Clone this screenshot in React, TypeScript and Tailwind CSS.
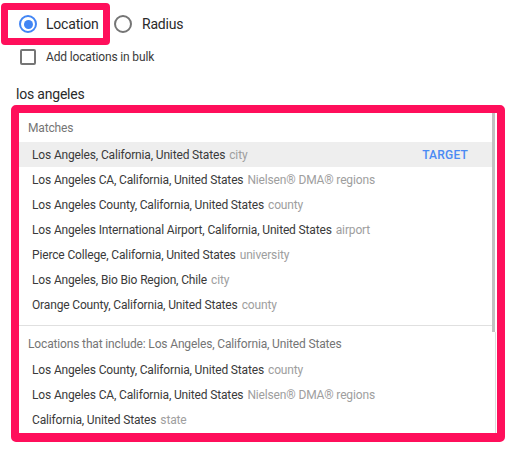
// App.tsx
// * location targeting picker w/ highlighted search results

type Result = { name: string; kind: string; target?: boolean };

const matches: Result[] = [
  { name: 'Los Angeles, California, United States', kind: 'city', target: true },
  { name: 'Los Angeles CA, California, United States', kind: 'Nielsen® DMA® regions' },
  { name: 'Los Angeles County, California, United States', kind: 'county' },
  { name: 'Los Angeles International Airport, California, United States', kind: 'airport' },
  { name: 'Pierce College, California, United States', kind: 'university' },
  { name: 'Los Angeles, Bio Bio Region, Chile', kind: 'city' },
  { name: 'Orange County, California, United States', kind: 'county' },
];

const includes: Result[] = [
  { name: 'Los Angeles County, California, United States', kind: 'county' },
  { name: 'Los Angeles CA, California, United States', kind: 'Nielsen® DMA® regions' },
  { name: 'California, United States', kind: 'state' },
];

function Row({ item }: { item: Result }) {
  return (
    <div
      className={`h-[25px] flex items-center pl-[13px] pr-6 text-[12px] ${
        item.target ? 'bg-[#eeeeee]' : ''
      }`}
    >
      <span className="text-[#3a3a3a] tracking-[-0.15px]">{item.name}</span>
      <span className="ml-[4px] text-[#9e9e9e] tracking-[-0.15px]">{item.kind}</span>
      {item.target && (
        <span className="ml-auto font-medium text-[#4a8af4] tracking-[0.2px]">TARGET</span>
      )}
    </div>
  );
}

function Radio({ checked }: { checked?: boolean }) {
  return (
    <span
      className={`w-[18px] h-[18px] rounded-full border-2 flex items-center justify-center ${
        checked ? 'border-[#4285f4]' : 'border-[#757575]'
      }`}
    >
      {checked && <span className="w-[9px] h-[9px] rounded-full bg-[#4285f4]" />}
    </span>
  );
}

export default function App() {
  return (
    <div className="w-[511px] h-[471px] bg-white pl-[1px] pt-[3px] font-['Roboto',sans-serif]">
      {/* Radio choice */}
      <div className="flex items-center">
        <div className="h-[42px] w-[109px] border-[7px] border-[#ff0f5b] rounded-[4px] flex items-center pl-[11px]">
          <Radio checked />
          <span className="ml-[9px] text-[14px] text-[#2a2a2a] tracking-[-0.2px]">Location</span>
        </div>
        <div className="flex items-center ml-[4px]">
          <Radio />
          <span className="ml-[10px] text-[14px] text-[#2a2a2a] tracking-[-0.2px]">Radius</span>
        </div>
      </div>

      {/* Bulk checkbox */}
      <div className="flex items-center mt-[4px] ml-[19px] h-[16px]">
        <span className="w-[16px] h-[16px] border-2 border-[#757575] rounded-[2px]" />
        <span className="ml-[10px] text-[12px] text-[#3a3a3a] tracking-[-0.15px]">Add locations in bulk</span>
      </div>

      {/* Query */}
      <div className="mt-[19px] ml-[15px] h-[20px] flex items-center text-[14px] text-[#2a2a2a] tracking-[-0.2px]">
        los angeles
      </div>

      {/* Results panel */}
      <div className="mt-[1px] ml-[10px] w-[494px] h-[337px] border-[8px] border-b-[9px] border-[#ff0f5b] rounded-[5px] flex bg-white">
        <div className="flex-1 flex flex-col">
          <div className="h-[29px] flex items-center pl-[9px] text-[12px] text-[#757575] tracking-[-0.15px]">Matches</div>
          {matches.map((m) => (
            <Row key={m.name + m.kind} item={m} />
          ))}
          <div className="mt-[8px] h-px bg-[#e0e0e0]" />
          <div className="h-[31px] pt-[4px] flex items-center pl-[9px] text-[12px] text-[#757575] tracking-[-0.15px]">
            Locations that include: Los Angeles, California, United States
          </div>
          {includes.map((m) => (
            <Row key={m.name + m.kind} item={m} />
          ))}
        </div>

        {/* Scrollbar */}
        <div className="w-[5px] flex">
          <div className="w-[3px] h-[219px] bg-[#c2c2c2]" />
          <div className="w-[2px] flex flex-col">
            <div className="h-[219px]" />
            <div className="flex-1 w-px bg-[#dcdcdc]" />
          </div>
        </div>
      </div>
    </div>
  );
}
